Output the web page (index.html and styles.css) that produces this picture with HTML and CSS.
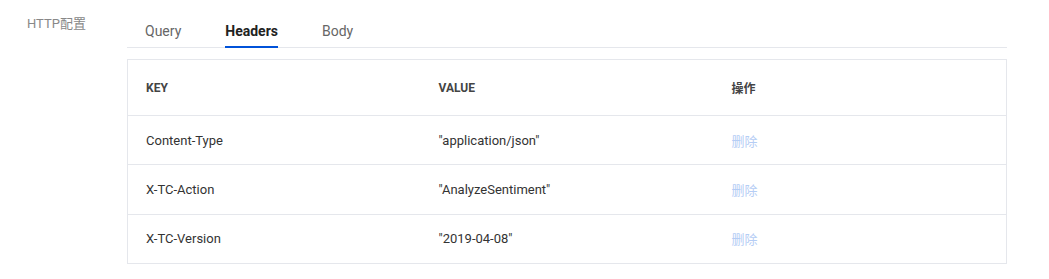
FILE: index.html
```html
<!DOCTYPE html>
<html lang="zh-CN">
<head>
    <meta charset="UTF-8">
    <meta name="viewport" content="width=device-width, initial-scale=1.0">
    <title>HTTP配置</title>
    <link rel="stylesheet" href="styles.css">
</head>
<body>
    <div class="form-row">
        <div class="form-label">HTTP配置</div>
        <div class="form-control">
            <div class="tabs">
                <div class="tab">Query</div>
                <div class="tab active">Headers</div>
                <div class="tab">Body</div>
            </div>

            <table class="kv-table">
                <thead>
                    <tr>
                        <th>KEY</th>
                        <th>VALUE</th>
                        <th>操作</th>
                    </tr>
                </thead>
                <tbody>
                    <tr>
                        <td>Content-Type</td>
                        <td>"application/json"</td>
                        <td><a class="link-disabled">删除</a></td>
                    </tr>
                    <tr>
                        <td>X-TC-Action</td>
                        <td>"AnalyzeSentiment"</td>
                        <td><a class="link-disabled">删除</a></td>
                    </tr>
                    <tr>
                        <td>X-TC-Version</td>
                        <td>"2019-04-08"</td>
                        <td><a class="link-disabled">删除</a></td>
                    </tr>
                </tbody>
            </table>
        </div>
    </div>
</body>
</html>
```

FILE: styles.css
```css
body {
    margin: 0;
    padding: 0;
    background: #fff;
    color: #333;
    font-family: Roboto, "Noto Sans CJK SC", sans-serif;
}
.form-row {
    display: flex;
    padding-right: 42px;
}
.form-label {
    width: 100px;
    padding: 14px 0 0 27px;
    font-size: 13px;
    line-height: 20px;
    color: #888;
}
.form-control {
    flex: 1;
}
.tabs {
    display: flex;
    gap: 44px;
    padding-left: 18px;
    border-bottom: 1px solid #e5e7ec;
    height: 47px;
}
.tab {
    padding-top: 20px;
    height: 28px;
    line-height: 22px;
    font-size: 14px;
    color: #666;
}
.tab.active {
    color: #222;
    font-weight: bold;
    box-shadow: inset 0 -2px 0 #0052d9;
}
.kv-table {
    width: 100%;
    margin-top: 11px;
    border-collapse: collapse;
    table-layout: fixed;
    border: 1px solid #e5e7ec;
    font-size: 13px;
}
.kv-table th {
    height: 55px;
    padding: 0 18px;
    text-align: left;
    font-size: 12px;
    font-weight: bold;
    color: #444;
    border-bottom: 1px solid #e5e7ec;
}
.kv-table td {
    height: 48.3px;
    padding: 0 18px;
    color: #333;
    border-bottom: 1px solid #e5e7ec;
}
.link-disabled {
    color: #b5cdf5;
    cursor: not-allowed;
}
```
